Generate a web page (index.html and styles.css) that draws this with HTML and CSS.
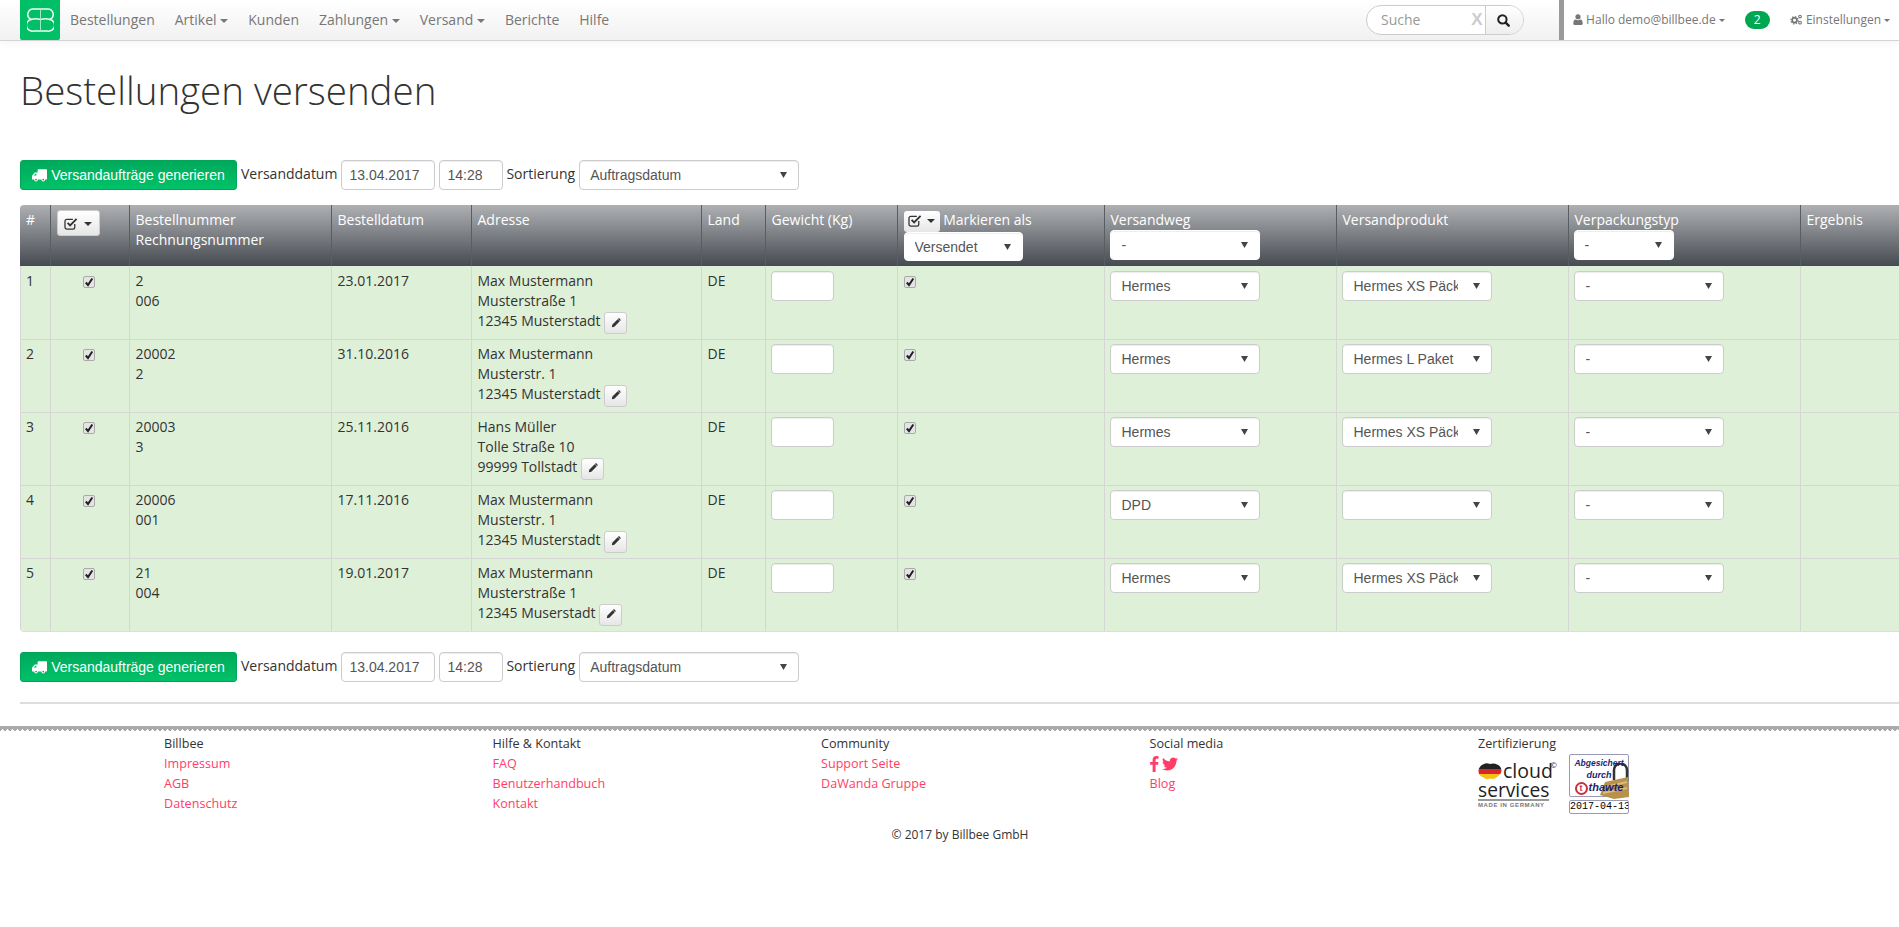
FILE: index.html
```html
<!DOCTYPE html>
<html lang="de">
<head>
<meta charset="utf-8">
<title>Bestellungen versenden</title>
<link rel="stylesheet" href="styles.css">
</head>
<body>
<svg class="sprites" width="0" height="0">
  <symbol id="i-truck" viewBox="0 0 24 20"><path fill="currentColor" d="M9 1.500c0-.8.7-1.500 1.500-1.500h12C23.300 0 24 .7 24 1.500V15c0 .8-.7 1.500-1.500 1.500H21a3 3 0 0 1-6 0H9.500a3 3 0 0 1-6 0H1c-.6 0-1-.4-1-1v-4.500c0-.5.2-1 .6-1.400L4 5.600C4.400 5.200 4.900 5 5.400 5H9zM2.500 10H7V7H5.500zM6.500 18a1.500 1.500 0 1 0 0-3 1.500 1.500 0 0 0 0 3zm11.500 0a1.500 1.500 0 1 0 0-3 1.500 1.500 0 0 0 0 3z" fill-rule="evenodd"/></symbol>
  <symbol id="i-check" viewBox="0 0 16 14"><path fill="none" stroke="currentColor" stroke-width="1.400" d="M11.500 7.500V11a2 2 0 0 1-2 2H3a2 2 0 0 1-2-2V4.500a2 2 0 0 1 2-2h6.500"/><path fill="none" stroke="currentColor" stroke-width="2" d="M3.800 6.300 6.500 9 13.500 2"/></symbol>
  <symbol id="i-pencil" viewBox="0 0 12 12"><path fill="currentColor" d="M8 1.500 10.500 4 4 10.500 1 11l.5-3zM8.800.7c.4-.4 1-.4 1.400 0l1.100 1.100c.4.400.4 1 0 1.400l-.4.400-2.500-2.500z"/></symbol>
  <symbol id="i-user" viewBox="0 0 12 14"><circle fill="currentColor" cx="6" cy="3.500" r="3.300"/><path fill="currentColor" d="M1.500 14C.6 14 0 13.400 0 12.500 0 9.500.8 7 3 7c.7.600 1.800 1 3 1s2.300-.4 3-1c2.200 0 3 2.500 3 5.500 0 .9-.6 1.500-1.500 1.500z"/></symbol>
  <symbol id="i-cogs" viewBox="0 0 16 14"><g fill="none" stroke="currentColor"><circle cx="5.500" cy="8" r="3" stroke-width="2.200"/><circle cx="5.500" cy="8" r="4.600" stroke-width="1.600" stroke-dasharray="1.800 1.800"/><circle cx="12.500" cy="3.200" r="1.700" stroke-width="1.400"/><circle cx="12.500" cy="11" r="1.700" stroke-width="1.400"/></g></symbol>
  <symbol id="i-search" viewBox="0 0 14 14"><circle cx="5.800" cy="5.800" r="4.500" fill="none" stroke="currentColor" stroke-width="2.200"/><path stroke="currentColor" stroke-width="2.600" stroke-linecap="round" d="M9.300 9.300 12.600 12.600"/></symbol>
  <symbol id="i-fb" viewBox="0 0 10 18"><path fill="currentColor" d="M9.500.1v2.900H7.800c-1.300 0-1.600.6-1.600 1.600v2.100h3.200l-.4 3.200H6.200V18H2.900V9.900H.1V6.700h2.800V4.300C2.900 1.600 4.600.1 7 .1c1.100 0 2.100.1 2.500 0z"/></symbol>
  <symbol id="i-tw" viewBox="0 0 24 24"><path fill="currentColor" d="M23.953 4.570a10 10 0 0 1-2.825.775 4.958 4.958 0 0 0 2.163-2.723c-.951.555-2.005.959-3.127 1.184a4.920 4.920 0 0 0-8.384 4.482C7.690 8.095 4.067 6.130 1.640 3.162a4.822 4.822 0 0 0-.666 2.475c0 1.710.870 3.213 2.188 4.096a4.904 4.904 0 0 1-2.228-.616v.060a4.923 4.923 0 0 0 3.946 4.827 4.996 4.996 0 0 1-2.212.085 4.936 4.936 0 0 0 4.604 3.417 9.867 9.867 0 0 1-6.102 2.105c-.390 0-.779-.023-1.170-.067a13.995 13.995 0 0 0 7.557 2.209c9.053 0 13.998-7.496 13.998-13.985 0-.210 0-.420-.015-.630A9.935 9.935 0 0 0 24 4.590z"/></symbol>
</svg>

<header class="navbar">
  <div class="nav-left">
    <a class="logo" href="#">
      <svg width="27" height="24" viewBox="0 0 27 24"><g fill="none" stroke="#effdf5" stroke-width="1.500"><path d="M13.500 1H6.500a5.500 5.500 0 0 0-2.500 10.500A5.700 5.700 0 0 0 6.500 23h7M13.500 1h7a5.500 5.500 0 0 1 2.500 10.500A5.700 5.700 0 0 1 20.500 23h-7"/><path d="M4 11.500c3-1 6-1 9.500 0 3.500-1 6.500-1 9.500 0"/></g><path d="M13.500 1v22" stroke="#9fe8c3" stroke-width="1"/></svg>
    </a>
    <nav class="menu">
      <a href="#">Bestellungen</a>
      <a href="#">Artikel <i class="caret"></i></a>
      <a href="#">Kunden</a>
      <a href="#">Zahlungen <i class="caret"></i></a>
      <a href="#">Versand <i class="caret"></i></a>
      <a href="#">Berichte</a>
      <a href="#">Hilfe</a>
    </nav>
    <div class="search">
      <span class="search-field">Suche</span>
      <span class="search-x">X</span>
      <span class="search-btn"><svg width="13" height="13"><use href="#i-search"/></svg></span>
    </div>
  </div>
  <div class="nav-right">
    <a class="user" href="#"><svg width="10" height="11"><use href="#i-user"/></svg> Hallo demo@billbee.de <i class="caret small"></i></a>
    <span class="badge">2</span>
    <a class="settings" href="#"><svg width="13" height="11"><use href="#i-cogs"/></svg> Einstellungen <i class="caret small"></i></a>
  </div>
</header>

<main class="page">
  <h1>Bestellungen versenden</h1>

  <form class="toolbar">
    <button class="btn-go" type="button"><svg width="15" height="13"><use href="#i-truck"/></svg> Versandaufträge generieren</button>
    <label>Versanddatum</label>
    <input class="fc date" value="13.04.2017">
    <input class="fc time" value="14:28">
    <label>Sortierung</label>
    <select class="fc sort"><option>Auftragsdatum</option></select>
  </form>

  <div class="table-wrap">
    <table>
      <colgroup>
        <col class="c1"><col class="c2"><col class="c3"><col class="c4"><col class="c5"><col class="c6"><col class="c7"><col class="c8"><col class="c9"><col class="c10"><col class="c11"><col class="c12">
      </colgroup>
      <thead>
        <tr>
          <th>#</th>
          <th><button class="btn-check" type="button"><svg width="15" height="13"><use href="#i-check"/></svg> <i class="caret dark"></i></button></th>
          <th>Bestellnummer<br>Rechnungsnummer</th>
          <th>Bestelldatum</th>
          <th>Adresse</th>
          <th>Land</th>
          <th>Gewicht (Kg)</th>
          <th>
            <div class="mark-row"><button class="btn-check narrow" type="button"><svg width="15" height="13"><use href="#i-check"/></svg> <i class="caret dark"></i></button> Markieren als</div>
            <select class="fc mark"><option>Versendet</option></select>
          </th>
          <th>Versandweg<select class="fc wide"><option>-</option></select></th>
          <th>Versandprodukt</th>
          <th>Verpackungstyp<select class="fc packhead"><option>-</option></select></th>
          <th>Ergebnis</th>
        </tr>
      </thead>
      <tbody>
        <tr>
          <td>1</td><td class="ctr"><input type="checkbox" checked></td><td>2<br>006</td><td>23.01.2017</td>
          <td>Max Mustermann<br>Musterstraße 1<br>12345 Musterstadt <button class="btn-edit" type="button"><svg width="10" height="10"><use href="#i-pencil"/></svg></button></td>
          <td>DE</td><td><input class="fc weight"></td><td><input type="checkbox" checked></td>
          <td><select class="fc wide"><option>Hermes</option></select></td>
          <td><select class="fc wide"><option>Hermes XS Päckchen</option></select></td>
          <td><select class="fc wide"><option>-</option></select></td><td></td>
        </tr>
        <tr>
          <td>2</td><td class="ctr"><input type="checkbox" checked></td><td>20002<br>2</td><td>31.10.2016</td>
          <td>Max Mustermann<br>Musterstr. 1<br>12345 Musterstadt <button class="btn-edit" type="button"><svg width="10" height="10"><use href="#i-pencil"/></svg></button></td>
          <td>DE</td><td><input class="fc weight"></td><td><input type="checkbox" checked></td>
          <td><select class="fc wide"><option>Hermes</option></select></td>
          <td><select class="fc wide"><option>Hermes L Paket</option></select></td>
          <td><select class="fc wide"><option>-</option></select></td><td></td>
        </tr>
        <tr>
          <td>3</td><td class="ctr"><input type="checkbox" checked></td><td>20003<br>3</td><td>25.11.2016</td>
          <td>Hans Müller<br>Tolle Straße 10<br>99999 Tollstadt <button class="btn-edit" type="button"><svg width="10" height="10"><use href="#i-pencil"/></svg></button></td>
          <td>DE</td><td><input class="fc weight"></td><td><input type="checkbox" checked></td>
          <td><select class="fc wide"><option>Hermes</option></select></td>
          <td><select class="fc wide"><option>Hermes XS Päckchen</option></select></td>
          <td><select class="fc wide"><option>-</option></select></td><td></td>
        </tr>
        <tr>
          <td>4</td><td class="ctr"><input type="checkbox" checked></td><td>20006<br>001</td><td>17.11.2016</td>
          <td>Max Mustermann<br>Musterstr. 1<br>12345 Musterstadt <button class="btn-edit" type="button"><svg width="10" height="10"><use href="#i-pencil"/></svg></button></td>
          <td>DE</td><td><input class="fc weight"></td><td><input type="checkbox" checked></td>
          <td><select class="fc wide"><option>DPD</option></select></td>
          <td><select class="fc wide"><option></option></select></td>
          <td><select class="fc wide"><option>-</option></select></td><td></td>
        </tr>
        <tr>
          <td>5</td><td class="ctr"><input type="checkbox" checked></td><td>21<br>004</td><td>19.01.2017</td>
          <td>Max Mustermann<br>Musterstraße 1<br>12345 Muserstadt <button class="btn-edit" type="button"><svg width="10" height="10"><use href="#i-pencil"/></svg></button></td>
          <td>DE</td><td><input class="fc weight"></td><td><input type="checkbox" checked></td>
          <td><select class="fc wide"><option>Hermes</option></select></td>
          <td><select class="fc wide"><option>Hermes XS Päckchen</option></select></td>
          <td><select class="fc wide"><option>-</option></select></td><td></td>
        </tr>
      </tbody>
    </table>
  </div>

  <form class="toolbar bottom">
    <button class="btn-go" type="button"><svg width="15" height="13"><use href="#i-truck"/></svg> Versandaufträge generieren</button>
    <label>Versanddatum</label>
    <input class="fc date" value="13.04.2017">
    <input class="fc time" value="14:28">
    <label>Sortierung</label>
    <select class="fc sort"><option>Auftragsdatum</option></select>
  </form>

  <hr class="rule">
</main>

<div class="zigzag"></div>

<footer class="footer">
  <div class="foot-grid">
    <div class="foot-col"><span>Billbee</span><a href="#">Impressum</a><a href="#">AGB</a><a href="#">Datenschutz</a></div>
    <div class="foot-col"><span>Hilfe &amp; Kontakt</span><a href="#">FAQ</a><a href="#">Benutzerhandbuch</a><a href="#">Kontakt</a></div>
    <div class="foot-col"><span>Community</span><a href="#">Support Seite</a><a href="#">DaWanda Gruppe</a></div>
    <div class="foot-col"><span>Social media</span>
      <a class="social" href="#"><svg width="9" height="16"><use href="#i-fb"/></svg><svg width="16" height="16"><use href="#i-tw"/></svg></a>
      <a href="#">Blog</a></div>
    <div class="foot-col"><span>Zertifizierung</span>
      <div class="certs">
        <div class="cloud">
          <svg class="cloud-mark" width="24" height="17" viewBox="0 0 24 17">
            <defs><clipPath id="cl"><path d="M6 1c2-1.300 4-.800 6 0 2-.800 5-.800 7 .5 2 .500 4.500 3 4.500 6s-2 5-4.500 6.500c-2 2-5 2.500-7 1.500-3 1-5 .5-6.500-1C2 13.500.5 11 .5 8S3 2 6 1z"/></clipPath></defs>
            <g clip-path="url(#cl)"><rect width="24" height="6" fill="#222"/><rect y="6" width="24" height="5" fill="#d8262c"/><rect y="11" width="24" height="6" fill="#f2c21b"/></g>
          </svg>
          <span class="cloud-a">cloud</span><span class="cloud-c">©</span>
          <span class="cloud-b">services</span>
          <span class="cloud-d">MADE IN GERMANY</span>
        </div>
        <div class="seal">
          <div class="seal-box">
            <svg class="lock" width="30" height="36" viewBox="0 0 30 36"><path d="M14 17V7a6.500 6.500 0 0 1 13 0v11" fill="none" stroke="#333" stroke-width="2.500"/><path d="M0 32 5 19 28 14l1 20-15 2z" fill="#b8924a"/><path d="M5 24l22-5M3 30l24-5" stroke="#d9bd7f" stroke-width="2" fill="none"/></svg>
            <span class="seal-a">Abgesichert</span>
            <span class="seal-b">durch</span>
            <span class="seal-t"><i>t</i>thawte</span>
          </div>
          <div class="seal-date">2017-04-13</div>
        </div>
      </div>
    </div>
  </div>
  <p class="copy">© 2017 by Billbee GmbH</p>
</footer>
</body>
</html>
```
FILE: styles.css
```css
* { box-sizing: border-box; }
html, body { margin: 0; padding: 0; }
body {
  font-family: "Open Sans", "Liberation Sans", sans-serif;
  font-size: 14px;
  line-height: 20px;
  color: #333;
  background: #fff;
  overflow-x: hidden;
}
a { text-decoration: none; color: inherit; }
.sprites { position: absolute; }

.navbar {
  display: flex;
  height: 41px;
  border-bottom: 1px solid #d4d4d4;
  box-shadow: 0 3px 6px rgba(0,0,0,.04);
}
.nav-left {
  width: 1564px;
  display: flex;
  align-items: center;
  padding-left: 20px;
  border-right: 5px solid #9a9a9a;
  background: linear-gradient(#fff, #f1f1f1);
}
.logo {
  width: 40px; height: 40px;
  display: flex; align-items: center; justify-content: center;
  background: #00bf66;
  border-radius: 0 0 2px 2px;
}
.menu { display: flex; gap: 20px; margin-left: 10px; color: #777; }
.caret {
  display: inline-block;
  width: 0; height: 0;
  margin-left: 0;
  vertical-align: middle;
  border-top: 4px solid #777;
  border-left: 4px solid transparent;
  border-right: 4px solid transparent;
}
.caret.small { border-top-width: 3px; border-left-width: 3.500px; border-right-width: 3.500px; }
.caret.dark { margin-left: 1px; border-top-color: #333; }
.search {
  margin-left: auto;
  margin-right: 35px;
  width: 158px; height: 30px;
  display: flex; align-items: center;
  background: #fff;
  border: 1px solid #ccc;
  border-radius: 15px;
  overflow: hidden;
}
.search-field { flex: 1; padding-left: 14px; color: #999; }
.search-x { width: 16px; text-align: center; font: bold 17px "Liberation Sans", sans-serif; color: #ccc; }
.search-btn {
  width: 38px; height: 28px;
  display: flex; align-items: center; justify-content: center;
  padding-right: 3px;
  color: #222;
  border-left: 1px solid #ccc;
  background: linear-gradient(#fff, #eee);
}
.nav-right {
  flex: 1;
  display: flex;
  align-items: center;
  padding-left: 9px;
  font-size: 12px;
  color: #777;
}
.user svg, .settings svg { vertical-align: -1px; }
.badge {
  width: 25px; height: 18px;
  margin-left: 20px;
  line-height: 18px;
  text-align: center;
  color: #fff;
  background: #00a650;
  border-radius: 9px;
}
.settings { margin-left: 20px; white-space: nowrap; }

.page { padding: 0 0 0 20px; }
h1 {
  margin: 0;
  padding-top: 28px;
  height: 119px;
  font-size: 38.500px;
  line-height: 43px;
  font-weight: 300;
  color: #333;
}

.toolbar { display: flex; align-items: flex-start; height: 30px; }
.toolbar label { line-height: 28px; }
.btn-go {
  width: 217px; height: 30px;
  margin-right: 4px;
  padding: 0;
  font: 14px/20px "Liberation Sans", sans-serif;
  color: #fff;
  background: linear-gradient(#00a95c, #00c268);
  border: 1px solid #00a556;
  border-radius: 3px;
}
.btn-go svg { vertical-align: -2px; }
.fc {
  height: 30px;
  padding: 0 7px;
  font: 14px "Liberation Sans", sans-serif;
  color: #555;
  background-color: #fff;
  border: 1px solid #ccc;
  border-radius: 4px;
  box-shadow: inset 0 1px 1px rgba(0,0,0,.075);
}
select.fc {
  appearance: none;
  -webkit-appearance: none;
  padding: 0 33px 0 10px;
  background-image: url("data:image/svg+xml;utf8,<svg xmlns='http://www.w3.org/2000/svg' width='8' height='8'><path d='M0 1h7L3.500 7z' fill='%23444'/></svg>");
  background-repeat: no-repeat;
  background-position: right 10px center;
}
.date { width: 94px; margin-left: 4px; }
.time { width: 64px; margin-left: 4px; margin-right: 3px; }
.sort { width: 220px; margin-left: 4px; }

.table-wrap {
  margin-top: 15px;
  border-radius: 4px 0 0 4px;
  overflow: hidden;
  border-bottom: 1px solid #ddd;
}
table {
  width: 1879px;
  table-layout: fixed;
  border-collapse: collapse;
}
.c1 { width: 30px; } .c2 { width: 79px; } .c3 { width: 202px; } .c4 { width: 140px; }
.c5 { width: 230px; } .c6 { width: 64px; } .c7 { width: 132px; } .c8 { width: 207px; }
.c9 { width: 232px; } .c10 { width: 232px; } .c11 { width: 232px; } .c12 { width: 99px; }
th {
  height: 61px;
  padding: 5px 5px 0 6px;
  vertical-align: top;
  text-align: left;
  font-weight: 400;
  color: #fff;
  background: linear-gradient(#aeb0b3, #464b51);
  border-left: 1px solid #5a5e63;
}
td {
  height: 73px;
  padding: 5px 5px 5px 6px;
  vertical-align: top;
  background: #dff0d8;
  border-left: 1px solid #d6d6d6;
  border-top: 1px solid #d6d6d6;
}
tbody tr + tr td { padding-top: 4px; }
th:first-child, td:first-child { border-left: 0; padding-left: 6px; }
td:first-child { box-shadow: inset 1px 0 0 #d6d6d6; }
tbody tr:first-child td { border-top: 0; }
td.ctr { text-align: center; padding-right: 8px; }
input[type="checkbox"] {
  appearance: none;
  -webkit-appearance: none;
  display: inline-block;
  width: 12px; height: 12px;
  margin: 5px 0 0;
  vertical-align: top;
  border: 1px solid #aaa;
  border-radius: 2px;
  background: #e4e4e4 url("data:image/svg+xml;utf8,<svg xmlns='http://www.w3.org/2000/svg' width='10' height='10'><path d='M1.800 5.500 4 8 8.300 1.500' fill='none' stroke='%23222' stroke-width='2'/></svg>") center no-repeat;
}
.btn-check {
  width: 43px; height: 26px;
  padding: 0;
  color: #333;
  background: linear-gradient(#fff, #e6e6e6);
  border: 1px solid #ccc;
  border-radius: 3px;
}
.btn-check svg { vertical-align: -2px; }
.btn-check.narrow { width: 36px; height: 21px; border: 0; line-height: 18px; }
.mark-row { height: 22px; line-height: 20px; white-space: nowrap; }
.mark { display: block; width: 119px; height: 29px; }
th .wide, .packhead { display: block; margin-top: 0; }
select.wide { width: 150px; margin-left: -1px; padding-left: 11px; }
.packhead { width: 100px; margin-left: -1px; }
th select.fc { border-color: #fff; }
.weight { width: 63px; margin-left: -1px; }
.btn-edit {
  width: 23px; height: 22px;
  margin: 1px 0 -3px;
  padding: 0;
  vertical-align: top;
  color: #333;
  background: linear-gradient(#fff, #e6e6e6);
  border: 1px solid #ccc;
  border-radius: 3px;
}

.bottom { margin-top: 20px; }
.rule { height: 2px; margin: 20px 0 0; border: 0; background: #ddd; }

.zigzag {
  height: 5px;
  margin-top: 22px;
  background:
    linear-gradient(135deg, #aaa 50%, transparent 51%) 0 0 / 5px 5px repeat-x,
    linear-gradient(225deg, #aaa 50%, transparent 51%) 0 0 / 5px 5px repeat-x;
}
.footer { padding-top: 3px; }
.foot-grid {
  display: grid;
  grid-template-columns: repeat(5, 328.500px);
  padding-left: 164px;
}
.foot-col { display: flex; flex-direction: column; align-items: flex-start; font-size: 12.600px; }
.foot-col a { color: #ff3d67; }
.social { display: flex; gap: 3px; align-items: center; height: 20px; }
.copy { margin: 11px 0 0; font-size: 12px; text-align: center; padding-left: 21px; }

.certs { display: flex; gap: 12px; }
.cloud { position: relative; width: 79px; height: 52px; margin-top: 8px; color: #222; }
.cloud-mark { position: absolute; left: 0; top: 1px; }
.cloud-a { position: absolute; left: 25px; top: 0; font-size: 19.500px; line-height: 17px; }
.cloud-c { position: absolute; right: 0; top: -2px; font-size: 8px; line-height: 10px; }
.cloud-b { position: absolute; left: 0; top: 18px; font-size: 19.200px; line-height: 19px; }
.cloud-d {
  position: absolute; left: 0; top: 37px; width: 71px;
  border-top: 2px solid #999;
  font: bold 6px/9px "Liberation Sans", sans-serif;
  letter-spacing: .6px;
  white-space: nowrap;
  color: #777;
}
.seal { width: 60px; }
.seal-box {
  position: relative;
  height: 43px;
  border: 1px solid #9a9ab5;
  border-radius: 2px;
  text-align: center;
  font: italic bold 9px/11px "Liberation Sans", sans-serif;
  color: #1b1f78;
  background: #fff;
}
.seal-box span { display: block; position: relative; }
.seal-a { margin-top: 3px; font-size: 8.500px; }
.seal-b { margin-top: 1px; }
.seal-t { margin-top: 1px; font-size: 11px; white-space: nowrap; }
.seal-t i {
  display: inline-block;
  width: 13px; height: 13px;
  margin-right: 1px;
  border: 2px solid #c8323c;
  border-radius: 50%;
  font: bold 9px/9px "Liberation Sans", sans-serif;
  color: #c8323c;
}
.lock { position: absolute; right: -2px; bottom: -3px; }
.seal-date {
  height: 14px;
  margin-top: 3px;
  border: 1px solid #9a9ab5;
  border-radius: 2px;
  font: 10px/12px "Liberation Mono", monospace;
  text-align: center;
  color: #000;
  white-space: nowrap;
  overflow: hidden;
}
```
